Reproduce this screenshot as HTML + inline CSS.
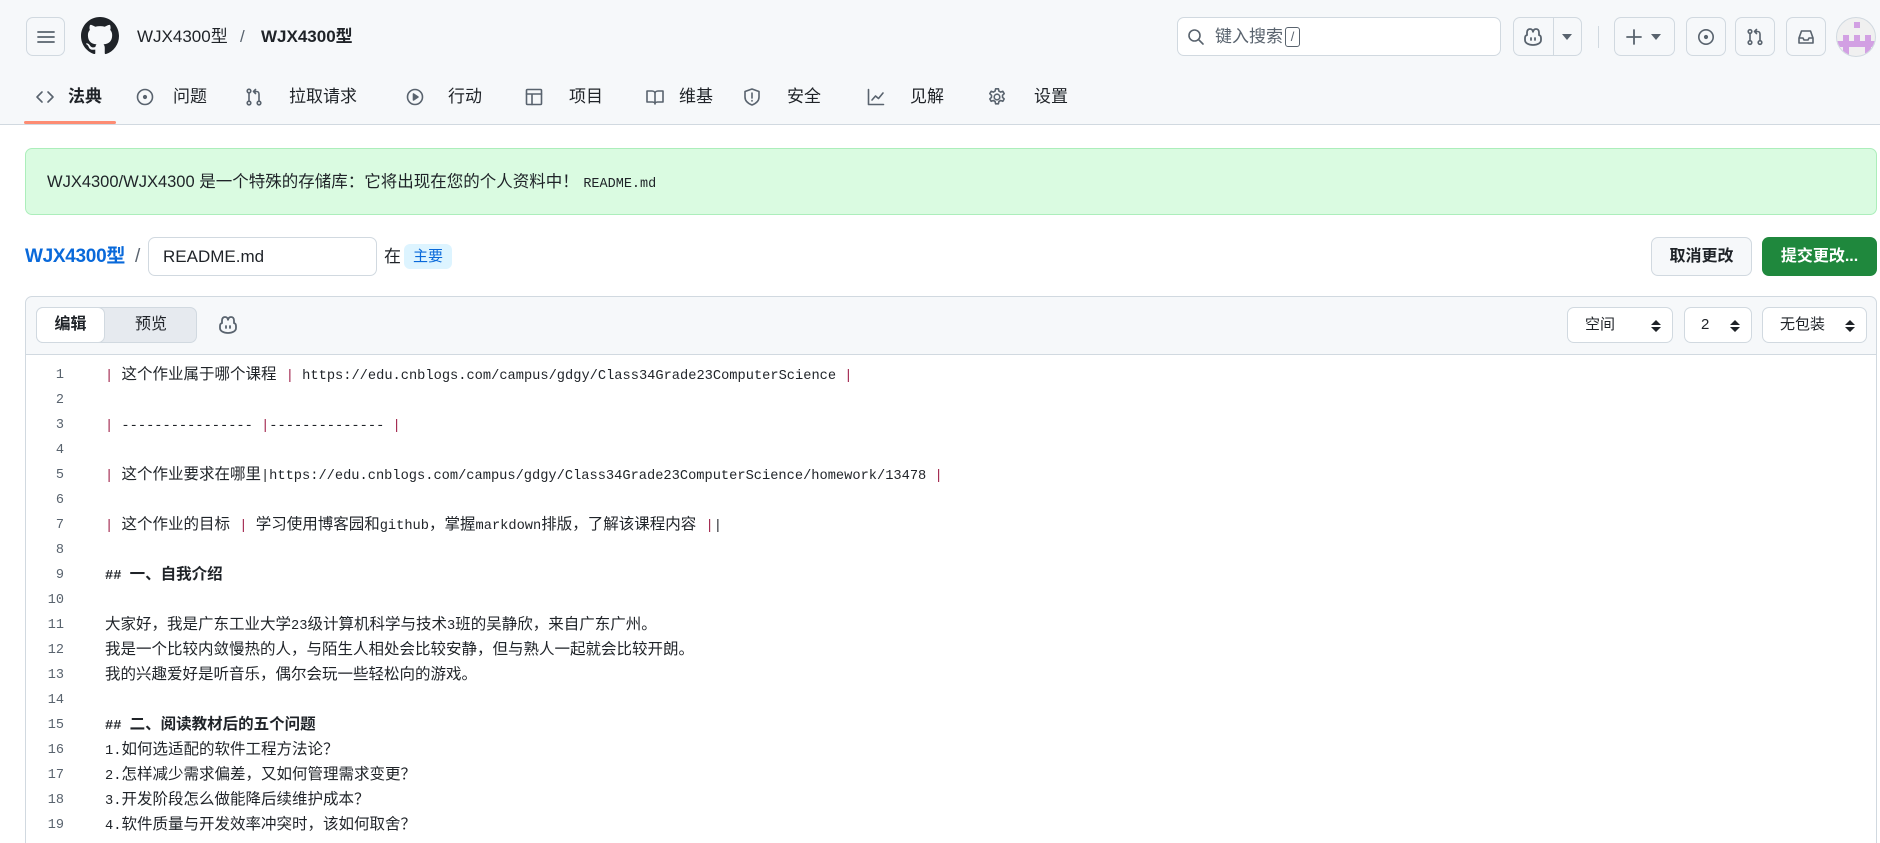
<!DOCTYPE html>
<html><head><meta charset="utf-8">
<style>
*{box-sizing:border-box;margin:0;padding:0}
body{width:1880px;height:843px;overflow:hidden;background:#fff;font-family:"Liberation Sans","Noto Sans CJK SC",sans-serif;color:#1f2328;position:relative}
.abs{position:absolute}
.hdr{left:0;top:0;width:1880px;height:125px;background:#f6f8fa;border-bottom:1px solid #d1d9e0}
.btn{position:absolute;border:1px solid #d1d9e0;border-radius:7px;background:#f6f8fa;display:flex;align-items:center;justify-content:center}
.ic{fill:none;stroke:#59636e;stroke-width:1.6;stroke-linecap:round;stroke-linejoin:round}
.tab{position:absolute;top:85px;font-size:17px;color:#1f2328;line-height:24px}
.ti{position:absolute;top:87px}
.code{position:absolute;left:25px;top:354px;width:1852px;height:489px;border-left:1px solid #d1d9e0;border-right:1px solid #d1d9e0}
.ln{position:absolute;left:0;width:38px;text-align:right;font-family:"Liberation Mono",monospace;font-size:13.5px;color:#59636e;line-height:25px}
.cl{position:absolute;left:79px;font-family:"Liberation Mono","Noto Sans CJK SC",monospace;font-size:15.5px;line-height:25px;white-space:pre;color:#1f2328}
.m{font-family:"Liberation Mono",monospace;font-size:13.7px}
.p{color:#a0224b}
.b{font-weight:bold}
.sel{position:absolute;top:307px;height:36px;border:1px solid #d1d9e0;border-radius:7px;background:#fff;font-size:15px;line-height:34px}
.sel svg{position:absolute;right:11px;top:11px}
</style></head><body>
<div class="abs hdr"></div>
<!-- hamburger -->
<div class="btn" style="left:26px;top:17px;width:39px;height:39px"><svg width="18" height="14"><path d="M1 2h16M1 7h16M1 12h16" stroke="#59636e" stroke-width="1.8" stroke-linecap="round"/></svg></div>
<!-- github logo -->
<svg class="abs" style="left:81px;top:17px" width="38" height="38" viewBox="0 0 16 16"><path fill="#1f2328" d="M8 0C3.58 0 0 3.58 0 8c0 3.54 2.29 6.53 5.47 7.59.4.07.55-.17.55-.38 0-.19-.01-.82-.01-1.49-2.01.37-2.53-.49-2.69-.94-.09-.23-.48-.94-.82-1.13-.28-.15-.68-.52-.01-.53.63-.01 1.08.58 1.23.82.72 1.21 1.87.87 2.33.66.07-.52.28-.87.51-1.07-1.78-.2-3.64-.89-3.64-3.95 0-.87.31-1.59.82-2.15-.08-.2-.36-1.02.08-2.12 0 0 .67-.21 2.2.82.64-.18 1.32-.27 2-.27.68 0 1.36.09 2 .27 1.53-1.04 2.2-.82 2.2-.82.44 1.1.16 1.92.08 2.12.51.56.82 1.27.82 2.15 0 3.07-1.87 3.75-3.65 3.95.29.25.54.73.54 1.48 0 1.07-.01 1.93-.01 2.2 0 .21.15.46.55.38A8.013 8.013 0 0016 8c0-4.42-3.58-8-8-8z"/></svg>
<div class="abs" style="left:137px;top:26px;font-size:17px;line-height:22px">WJX4300型</div>
<div class="abs" style="left:240px;top:26px;font-size:17px;color:#59636e;line-height:22px">/</div>
<div class="abs" style="left:261px;top:26px;font-size:17px;font-weight:bold;line-height:22px">WJX4300型</div>

<!-- search -->
<div class="abs" style="left:1177px;top:17px;width:324px;height:39px;border:1px solid #d1d9e0;border-radius:7px;background:#fff"></div>
<svg class="abs ic" style="left:1187px;top:28px" width="18" height="18" viewBox="0 0 18 18"><circle cx="7.5" cy="7.5" r="5.5"/><path d="M11.5 11.5l4.5 4.5"/></svg>
<div class="abs" style="left:1215px;top:26px;font-size:17px;color:#59636e;line-height:22px">键入搜索</div>
<div class="abs" style="left:1285px;top:27px;width:15px;height:20px;border:1px solid #59636e;border-radius:3px;font-size:13px;color:#59636e;text-align:center;line-height:18px">/</div>
<!-- copilot -->
<div class="btn" style="left:1513px;top:17px;width:69px;height:39px;justify-content:flex-start"></div>
<div class="abs" style="left:1553px;top:18px;width:1px;height:37px;background:#d1d9e0"></div>
<svg class="abs" style="left:1523px;top:27px" width="20" height="19" viewBox="0 0 20 19"><path d="M4 8V5.5C4 3 5.5 2 7 2s3 1 3 3.5C10 3 11.5 2 13 2s3 1 3 3.5V8c1.5.5 2 1.5 2 3v2c0 3-3.5 5-8 5s-8-2-8-5v-2c0-1.5.5-2.5 2-3z" fill="none" stroke="#59636e" stroke-width="1.8"/><path d="M8 11v2M12 11v2" stroke="#59636e" stroke-width="1.8" stroke-linecap="round"/></svg>
<svg class="abs" style="left:1562px;top:34px" width="10" height="6"><path d="M0 0h10L5 6z" fill="#59636e"/></svg>
<div class="abs" style="left:1598px;top:26px;width:1px;height:22px;background:#d1d9e0"></div>
<!-- plus -->
<div class="btn" style="left:1614px;top:17px;width:61px;height:39px"></div>
<svg class="abs" style="left:1625px;top:28px" width="18" height="18"><path d="M9 2v14M2 9h14" stroke="#59636e" stroke-width="1.8" stroke-linecap="round"/></svg>
<svg class="abs" style="left:1651px;top:34px" width="10" height="6"><path d="M0 0h10L5 6z" fill="#59636e"/></svg>
<div class="btn" style="left:1686px;top:17px;width:40px;height:39px"><svg class="ic" width="18" height="18" viewBox="0 0 18 18"><circle cx="9" cy="9" r="7.2"/><circle cx="9" cy="9" r="1.3" fill="#59636e"/></svg></div>
<div class="btn" style="left:1735px;top:17px;width:40px;height:39px"><svg class="ic" width="18" height="18" viewBox="0 0 18 18"><circle cx="4" cy="3.5" r="1.8"/><circle cx="4" cy="14.5" r="1.8"/><circle cx="14" cy="14.5" r="1.8"/><path d="M4 5.3v7.4M14 12.7V6c0-1.5-1-2.5-2.5-2.5H8.5M10.5 1.5l-2 2 2 2"/></svg></div>
<div class="btn" style="left:1786px;top:17px;width:40px;height:39px"><svg class="ic" width="18" height="18" viewBox="0 0 18 18"><path d="M2 10l2.5-7h9l2.5 7v5H2zM2 10h4l1 2h4l1-2h4"/></svg></div>
<!-- avatar -->
<div class="abs" style="left:1836px;top:17px;width:40px;height:40px;border-radius:50%;background:#f0f0f0;border:1px solid #d1d9e0;overflow:hidden">
<div class="abs" style="left:17px;top:4px;width:6px;height:6px;background:#d2a0e3"></div>
<div class="abs" style="left:6px;top:17px;width:6px;height:6px;background:#d2a0e3"></div>
<div class="abs" style="left:17px;top:17px;width:6px;height:6px;background:#d2a0e3"></div>
<div class="abs" style="left:28px;top:17px;width:6px;height:6px;background:#d2a0e3"></div>
<div class="abs" style="left:0;top:23px;width:40px;height:6px;background:#d2a0e3"></div>
<div class="abs" style="left:6px;top:29px;width:6px;height:8px;background:#d2a0e3"></div>
<div class="abs" style="left:28px;top:29px;width:6px;height:8px;background:#d2a0e3"></div>
</div>

<!-- tabs -->
<svg class="ti ic" style="left:35px" width="20" height="20" viewBox="0 0 20 20"><path d="M7 5l-5 5 5 5M13 5l5 5-5 5"/></svg>
<div class="tab" style="left:68px;font-weight:bold">法典</div>
<div class="abs" style="left:24px;top:121px;width:92px;height:3px;background:#fd8c73;border-radius:2px"></div>
<svg class="ti ic" style="left:135px" width="20" height="20" viewBox="0 0 20 20"><circle cx="10" cy="10" r="7.5"/><circle cx="10" cy="10" r="1.3" fill="#59636e"/></svg>
<div class="tab" style="left:173px">问题</div>
<svg class="ti ic" style="left:244px" width="20" height="20" viewBox="0 0 20 20"><circle cx="5" cy="4" r="1.8"/><circle cx="5" cy="16" r="1.8"/><circle cx="15" cy="16" r="1.8"/><path d="M5 6v8M15 14V7c0-1.5-1-2.5-2.5-2.5H9.5M11.5 2.5l-2 2 2 2"/></svg>
<div class="tab" style="left:289px">拉取请求</div>
<svg class="ti ic" style="left:405px" width="20" height="20" viewBox="0 0 20 20"><circle cx="10" cy="10" r="7.5"/><path d="M8.5 7v6l4.5-3z" fill="#59636e"/></svg>
<div class="tab" style="left:448px">行动</div>
<svg class="ti ic" style="left:524px" width="20" height="20" viewBox="0 0 20 20"><rect x="2.5" y="2.5" width="15" height="15" rx="1"/><path d="M2.5 7h15M8 7v10.5"/></svg>
<div class="tab" style="left:569px">项目</div>
<svg class="ti ic" style="left:645px" width="20" height="20" viewBox="0 0 20 20"><path d="M2 4h5c1.5 0 3 1 3 2.5V17c0-1-1-2-2.5-2H2zM18 4h-5c-1.5 0-3 1-3 2.5V17c0-1 1-2 2.5-2H18z"/></svg>
<div class="tab" style="left:679px">维基</div>
<svg class="ti ic" style="left:742px" width="20" height="20" viewBox="0 0 20 20"><path d="M10 2l7 2.5V10c0 4-3 6.5-7 8-4-1.5-7-4-7-8V4.5z"/><path d="M10 6v5M10 13.5v.5"/></svg>
<div class="tab" style="left:787px">安全</div>
<svg class="ti ic" style="left:866px" width="20" height="20" viewBox="0 0 20 20"><path d="M2.5 2.5v15h15M6 13l3.5-4 3 2.5L17 6"/></svg>
<div class="tab" style="left:910px">见解</div>
<svg class="ti ic" style="left:987px" width="20" height="20" viewBox="0 0 20 20"><circle cx="10" cy="10" r="2.8"/><path d="M8.6 1.8h2.8l.5 2.3 1.7 1 2.2-.8 1.4 2.4-1.7 1.6v2l1.7 1.6-1.4 2.4-2.2-.8-1.7 1-.5 2.3H8.6l-.5-2.3-1.7-1-2.2.8-1.4-2.4 1.7-1.6v-2L2.8 6.7l1.4-2.4 2.2.8 1.7-1z"/></svg>
<div class="tab" style="left:1034px">设置</div>

<!-- banner -->
<div class="abs" style="left:25px;top:148px;width:1852px;height:67px;background:#dafbe1;border:1px solid #aceebb;border-radius:7px"></div>
<div class="abs" style="left:47px;top:171px;font-size:16.5px;line-height:22px">WJX4300/WJX4300 是一个特殊的存储库：它将出现在您的个人资料中！ <span style="font-family:'Liberation Mono',monospace;font-size:13.5px">README.md</span></div>

<!-- file row -->
<div class="abs" style="left:25px;top:245px;font-size:19px;color:#0969da;font-weight:bold;line-height:24px;letter-spacing:-0.3px">WJX4300型</div>
<div class="abs" style="left:135px;top:245px;font-size:19px;color:#59636e;line-height:24px">/</div>
<div class="abs" style="left:148px;top:237px;width:229px;height:39px;border:1px solid #d1d9e0;border-radius:7px;background:#fff;font-size:17px;line-height:37px;padding-left:14px">README.md</div>
<div class="abs" style="left:384px;top:245px;font-size:17px;line-height:24px">在</div>
<div class="abs" style="left:404px;top:244px;width:48px;height:25px;border-radius:6px;background:#ddf4ff;color:#0969da;font-size:15px;line-height:25px;text-align:center">主要</div>
<div class="abs" style="left:1651px;top:237px;width:101px;height:39px;border:1px solid #d1d9e0;border-radius:7px;background:#f6f8fa;font-size:16px;font-weight:bold;line-height:37px;text-align:center">取消更改</div>
<div class="abs" style="left:1762px;top:237px;width:115px;height:39px;border-radius:7px;background:#1f883d;color:#fff;font-size:16px;font-weight:bold;line-height:39px;text-align:center">提交更改...</div>

<!-- editor header -->
<div class="abs" style="left:25px;top:296px;width:1852px;height:59px;background:#f6f8fa;border:1px solid #d1d9e0;border-radius:7px 7px 0 0"></div>
<div class="abs" style="left:36px;top:307px;width:161px;height:36px;background:#e6eaef;border:1px solid #d1d9e0;border-radius:7px"></div>
<div class="abs" style="left:36px;top:307px;width:69px;height:36px;background:#fff;border:1px solid #d1d9e0;border-radius:7px;font-size:16px;font-weight:bold;line-height:34px;text-align:center">编辑</div>
<div class="abs" style="left:105px;top:307px;width:92px;height:36px;font-size:16px;line-height:36px;text-align:center;color:#1f2328">预览</div>
<svg class="abs" style="left:218px;top:315px" width="20" height="19" viewBox="0 0 20 19"><path d="M4 8V5.5C4 3 5.5 2 7 2s3 1 3 3.5C10 3 11.5 2 13 2s3 1 3 3.5V8c1.5.5 2 1.5 2 3v2c0 3-3.5 5-8 5s-8-2-8-5v-2c0-1.5.5-2.5 2-3z" fill="none" stroke="#59636e" stroke-width="1.8"/><path d="M8 11v2M12 11v2" stroke="#59636e" stroke-width="1.8" stroke-linecap="round"/></svg>
<div class="sel" style="left:1567px;width:106px;padding-left:17px">空间<svg width="10" height="14"><path d="M0 6L5 1l5 5zM0 8l5 5 5-5z" fill="#1f2328"/></svg></div>
<div class="sel" style="left:1684px;width:68px;padding-left:16px">2<svg width="10" height="14"><path d="M0 6L5 1l5 5zM0 8l5 5 5-5z" fill="#1f2328"/></svg></div>
<div class="sel" style="left:1762px;width:105px;padding-left:17px">无包装<svg width="10" height="14"><path d="M0 6L5 1l5 5zM0 8l5 5 5-5z" fill="#1f2328"/></svg></div>

<!-- code -->
<div class="code">
<div class="ln" style="top:9px">1</div><div class="cl" style="top:9px"><span class="m p">| </span>这个作业属于哪个课程 <span class="m"><span class="p">|</span> https://edu.cnblogs.com/campus/gdgy/Class34Grade23ComputerScience <span class="p">|</span></span></div>
<div class="ln" style="top:34px">2</div>
<div class="ln" style="top:59px">3</div><div class="cl" style="top:59px"><span class="m"><span class="p">|</span> ---------------- <span class="p">|</span>-------------- <span class="p">|</span></span></div>
<div class="ln" style="top:84px">4</div>
<div class="ln" style="top:109px">5</div><div class="cl" style="top:109px"><span class="m p">| </span>这个作业要求在哪里<span class="m">|https://edu.cnblogs.com/campus/gdgy/Class34Grade23ComputerScience/homework/13478 <span class="p">|</span></span></div>
<div class="ln" style="top:134px">6</div>
<div class="ln" style="top:159px">7</div><div class="cl" style="top:159px"><span class="m p">| </span>这个作业的目标 <span class="m p">| </span>学习使用博客园和<span class="m">github</span>，掌握<span class="m">markdown</span>排版，了解该课程内容 <span class="m"><span class="p">|</span>|</span></div>
<div class="ln" style="top:184px">8</div>
<div class="ln" style="top:209px">9</div><div class="cl b" style="top:209px"><span class="m">## </span>一、自我介绍</div>
<div class="ln" style="top:234px">10</div>
<div class="ln" style="top:259px">11</div><div class="cl" style="top:259px">大家好，我是广东工业大学<span class="m">23</span>级计算机科学与技术<span class="m">3</span>班的吴静欣，来自广东广州。</div>
<div class="ln" style="top:284px">12</div><div class="cl" style="top:284px">我是一个比较内敛慢热的人，与陌生人相处会比较安静，但与熟人一起就会比较开朗。</div>
<div class="ln" style="top:309px">13</div><div class="cl" style="top:309px">我的兴趣爱好是听音乐，偶尔会玩一些轻松向的游戏。</div>
<div class="ln" style="top:334px">14</div>
<div class="ln" style="top:359px">15</div><div class="cl b" style="top:359px"><span class="m">## </span>二、阅读教材后的五个问题</div>
<div class="ln" style="top:384px">16</div><div class="cl" style="top:384px"><span class="m">1.</span>如何选适配的软件工程方法论？</div>
<div class="ln" style="top:409px">17</div><div class="cl" style="top:409px"><span class="m">2.</span>怎样减少需求偏差，又如何管理需求变更？</div>
<div class="ln" style="top:434px">18</div><div class="cl" style="top:434px"><span class="m">3.</span>开发阶段怎么做能降后续维护成本？</div>
<div class="ln" style="top:459px">19</div><div class="cl" style="top:459px"><span class="m">4.</span>软件质量与开发效率冲突时，该如何取舍？</div>
</div>
</body></html>
